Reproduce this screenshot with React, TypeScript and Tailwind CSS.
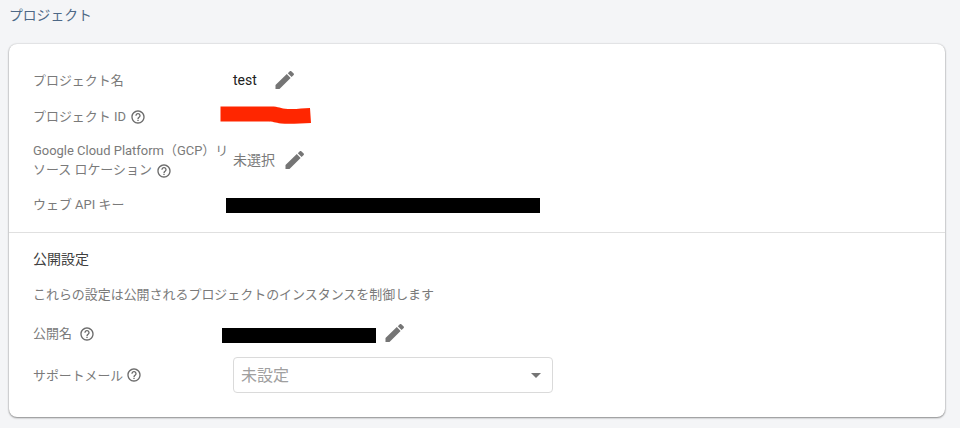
import type { ReactNode } from "react";
import { MdHelpOutline, MdArrowDropDown } from "react-icons/md";

function Help({ className = "mt-px ml-1" }: { className?: string }) {
  return <MdHelpOutline className={`inline-block h-4 w-4 shrink-0 text-[#6b6b6b] ${className}`} />;
}

function Pencil({ className = "" }: { className?: string }) {
  return (
    <svg className={`h-6 w-6 shrink-0 fill-[#757575] ${className}`} viewBox="0 0 24 24">
      <path d="M2.5 17V21H6.5L17.6 9.9L13.8 6.1ZM20.7 7.1C21.1 6.7 21.1 6 20.7 5.6L18.3 3.2C17.9 2.8 17.2 2.8 16.8 3.2L14.8 5.2L18.6 9Z" />
    </svg>
  );
}

function Row({ label, height, children }: { label: ReactNode; height: string; children: ReactNode }) {
  return (
    <div className={`flex items-center ${height}`}>
      <div className="flex w-[200px] shrink-0 items-center pt-px text-[12.96px] text-[#7a7a7a]">{label}</div>
      {children}
    </div>
  );
}

export default function App() {
  return (
    <div className="h-[428px] w-[960px] overflow-hidden bg-[#f4f5f7] font-['Roboto','Noto_Sans_CJK_JP',sans-serif] text-[13px]">
      <h2 className="flex h-11 items-start pt-[5px] pl-[9px] text-[13.8px] leading-5 text-[#4d6886]">プロジェクト</h2>
      <main className="ml-[9px] h-[373px] w-[936px] rounded-lg bg-white shadow-[0_1px_2px_rgba(0,0,0,0.4),0_0_2px_rgba(0,0,0,0.2)]">
        <section className="h-[189px] border-b border-[#e0e0e0] pt-[18px] pl-6">
          <Row height="h-9" label="プロジェクト名">
            <span className="text-[14px] text-[#212121]">test</span>
            <Pencil className="ml-4" />
          </Row>
          <Row height="h-9" label={<>プロジェクト ID<Help /></>}>
            <svg className="-mt-[3px] -ml-[13px] h-[18px] w-[91px]" viewBox="0 0 91 18">
              <path d="M0.5 0.5H51C59 0.5 60 2.5 68 3C76 3.5 83 2 90 2L91 17C81 17.5 69 18 61 17.5C55 16.5 53 15.5 47 15.5H0.5Z" fill="#ff2600" />
            </svg>
          </Row>
          <Row
            height="h-[52px]"
            label={
              <div className="leading-5">
                <div className="whitespace-nowrap">Google Cloud Platform（GCP）リ</div>
                <div className="-mt-px flex items-center">ソース ロケーション<Help className="mt-px ml-1" /></div>
              </div>
            }
          >
            <span className="text-[14px] text-[#7a7a7a]">未選択</span>
            <Pencil className="ml-2" />
          </Row>
          <Row height="h-9" label="ウェブ API キー">
            <span className="mt-[3px] -ml-[7px] h-[15px] w-[314px] bg-black" />
          </Row>
        </section>
        <section className="pt-2.5 pl-6">
          <h3 className="flex h-8 items-center text-[14px] text-[#404040]">公開設定</h3>
          <p className="flex h-10 items-center text-[12.96px] text-[#7a7a7a]">これらの設定は公開されるプロジェクトのインスタンスを制御します</p>
          <Row height="h-9" label={<>公開名<Help className="mt-px ml-[7px]" /></>}>
            <span className="mt-[5px] -ml-[11px] h-[15px] w-[154px] bg-black" />
            <Pencil className="ml-[7px]" />
          </Row>
          <Row height="h-12" label={<span className="flex items-center text-[12.9px]">サポートメール<Help className="ml-[3px]" /></span>}>
            <button className="flex h-9 w-80 items-center justify-between rounded border border-[#dadada] pr-1 pl-[7px] text-[16px] text-[#a0a0a0]">
              <span className="pt-px">未設定</span>
              <MdArrowDropDown className="mb-px h-6 w-6 text-[#757575]" />
            </button>
          </Row>
        </section>
      </main>
    </div>
  );
}
